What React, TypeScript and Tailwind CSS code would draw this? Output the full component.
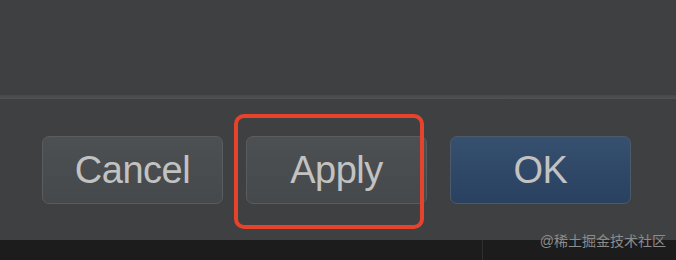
import React from "react";

const font = { fontFamily: '"Liberation Sans", Arial, sans-serif' };

function DialogButton({ label, primary = false }: { label: string; primary?: boolean }) {
  return (
    <button
      className={`flex items-center justify-center w-[181px] h-[68px] rounded-[7px] border text-[38px] leading-none tracking-[-0.5px] text-[#c2c2c2] ${
        primary
          ? "border-[#4d5a6b] bg-gradient-to-b from-[#36506f] to-[#2a4160]"
          : "border-[#5a5d5f] bg-gradient-to-b from-[#4d5052] to-[#46494b]"
      }`}
      style={font}
    >
      {label}
    </button>
  );
}

export default function App() {
  return (
    <div className="w-[676px] h-[260px] flex flex-col bg-[#3d3f41] overflow-hidden">
      {/* top panel */}
      <div className="h-[95px] bg-[#3f4042]" />
      <div className="h-[4px] bg-gradient-to-b from-[#46484a] to-[#4f5153]" />

      {/* button row */}
      <div className="flex-1 flex items-start pt-[37px] pl-[42px] gap-[23px] bg-[#3e4042]">
        <DialogButton label="Cancel" />
        <div className="relative">
          <DialogButton label="Apply" />
          <div className="absolute left-[-12px] top-[-22px] w-[190px] h-[115px] rounded-[10px] border-4 border-[#e5432b]" />
        </div>
        <DialogButton label="OK" primary />
      </div>

      {/* bottom strip */}
      <div className="relative h-[20px] flex bg-[#1c1c1c]">
        <div className="w-[483px] border-r border-[#2e2e2e]" />
        <span
          className="absolute right-[10px] top-[-9px] text-[14px] text-[#8c8c8c]"
          style={{ fontFamily: '"Liberation Sans", "Noto Sans CJK SC", sans-serif' }}
        >
          @稀土掘金技术社区
        </span>
      </div>
    </div>
  );
}
